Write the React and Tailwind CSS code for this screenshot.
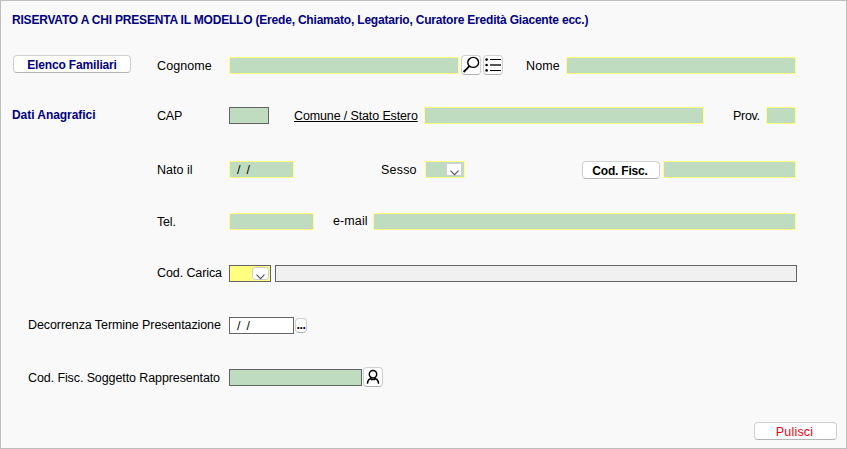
import React from 'react';
import clsx from 'clsx';

const tones = {
  light: 'border-[#ffff80] bg-[#c0dcc0]',
  dark: 'border-[#646464] bg-[#c0dcc0]',
  yellow: 'border-[#646464] bg-[#ffff80]',
  white: 'border-[#646464] bg-white',
  grey: 'border-[#646464] bg-[#f0f0f0]',
};

const Row = ({ className, children }) => (
  <div className={clsx('flex items-start h-[17px]', className)}>{children}</div>
);

const Label = ({ className, children }) => (
  <span className={clsx('shrink-0 whitespace-pre leading-[18px]', className)}>{children}</span>
);

const Field = ({ tone = 'light', className, children }) => (
  <div className={clsx('shrink-0 h-[17px] border flex justify-between whitespace-pre leading-[16px]', tones[tone], className)}>
    {children}
  </div>
);

const Button = ({ className, children }) => (
  <button
    className={clsx(
      'shrink-0 flex items-center justify-center bg-white border border-[#d0d0d0] border-b-[#b4b4b4] rounded-[4px] whitespace-pre',
      className
    )}
  >
    {children}
  </button>
);

const Arrow = ({ className }) => (
  <span className={clsx('ml-auto bg-white border border-[#d0d0d0] flex', className)}>
    <svg width="9" height="6" viewBox="0 0 9 6" className="m-auto translate-y-[3px]" fill="none" stroke="#505050" strokeWidth="1.1">
      <path d="M.5 .7 4.5 4.7 8.5 .7" />
    </svg>
  </span>
);

const SearchIcon = () => (
  <svg width="18" height="18" viewBox="0 0 18 18" className="shrink-0" fill="none" stroke="#000">
    <ellipse cx="11.2" cy="6.4" rx="5.4" ry="5" strokeWidth="1.4" />
    <path d="M7.4 10.2 1.6 16" strokeWidth="1.8" />
  </svg>
);

const ListIcon = () => (
  <svg width="18" height="18" viewBox="0 0 18 18" className="shrink-0">
    <g fill="#000">
      <circle cx="2.6" cy="3.6" r="1.3" />
      <circle cx="2.6" cy="9" r="1.3" />
      <circle cx="2.6" cy="14.4" r="1.3" />
      <rect x="6" y="3" width="11" height="1" />
      <rect x="6" y="14" width="11" height="1" />
    </g>
    <rect x="6" y="8" width="11" height="2" fill="#555" />
  </svg>
);

const PersonIcon = () => (
  <svg width="18" height="18" viewBox="0 0 18 18" className="shrink-0" fill="none" stroke="#000" strokeWidth="1.5">
    <circle cx="9" cy="6.2" r="3.7" />
    <path d="M6.4 9.4 7.6 11.6H10.4L11.6 9.4M6.6 10.8C4.4 11.4 3.5 13.2 3.5 15.8M11.4 10.8C13.6 11.4 14.5 13.2 14.5 15.8" />
  </svg>
);

export default function App() {
  return (
    <div className="w-[847px] h-[449px] overflow-hidden bg-[#f9f9f9] border border-[#bebebe] font-['Liberation_Sans',Arial,sans-serif] text-[12.5px] text-black">
      <Row className="mt-[10px] pl-[11px] text-[12px] text-[#000080] font-bold">
        <Label className="tracking-[-0.2px]">RISERVATO A CHI PRESENTA IL MODELLO (Erede, Chiamato, Legatario, Curatore Eredità Giacente ecc.)</Label>
      </Row>

      <Row className="mt-[29px] pl-[12px]">
        <Button className="-mt-[2px] w-[118px] h-[18px] pt-[2px] font-bold text-[12px] text-[#000080] tracking-[-0.15px]">Elenco Familiari</Button>
        <Label className="ml-[26px] w-[72px] tracking-[0.1px]">Cognome</Label>
        <Field className="w-[230px]" />
        <Button className="-mt-[2px] ml-[2px] w-[20px] h-[20px]"><SearchIcon /></Button>
        <Button className="-mt-[2px] ml-[2px] w-[20px] h-[20px]"><ListIcon /></Button>
        <Label className="ml-[23px] w-[40px] tracking-[0.1px]">Nome</Label>
        <Field className="w-[230px]" />
      </Row>

      <Row className="mt-[33px] pl-[11px]">
        <Label className="-mt-[1px] w-[145px] font-bold text-[12px] text-[#000080] tracking-[-0.05px]">Dati Anagrafici</Label>
        <Label className="w-[72px] tracking-[-0.2px]">CAP</Label>
        <Field tone="dark" className="w-[40px]" />
        <Label className="ml-[25px] w-[130px] tracking-[-0.13px] underline underline-offset-1">Comune / Stato Estero</Label>
        <Field className="w-[280px]" />
        <Label className="ml-[29px] w-[33px] tracking-[-0.3px]">Prov.</Label>
        <Field className="w-[30px]" />
      </Row>

      <Row className="mt-[37px] pl-[156px]">
        <Label className="w-[72px]">Nato il</Label>
        <Field className="w-[65px] pl-[7px] tracking-[-0.3px]">/  /</Field>
        <Label className="ml-[87px] w-[44px] tracking-[0.2px]">Sesso</Label>
        <Field className="w-[40px] pr-[2px]"><Arrow className="mt-[1px] w-[16px] h-[13px]" /></Field>
        <Button className="ml-[117px] w-[78px] h-[18px] pt-[2px] pr-[2px] font-bold text-[12px] tracking-[-0.2px]">Cod. Fisc.</Button>
        <Field className="ml-[3px] w-[133px]" />
      </Row>

      <Row className="mt-[35px] pl-[156px]">
        <Label className="w-[72px] tracking-[-0.2px]">Tel.</Label>
        <Field className="w-[85px]" />
        <Label className="-mt-[1px] ml-[19px] w-[40px] tracking-[0.1px]">e-mail</Label>
        <Field className="w-[423px]" />
      </Row>

      <Row className="mt-[35px] pl-[156px]">
        <Label className="-mt-[1px] w-[72px] tracking-[-0.1px]">Cod. Carica</Label>
        <Field tone="yellow" className="w-[42px] pr-[1px]"><Arrow className="mt-[1px] w-[17px] h-[13px] rounded-[3px]" /></Field>
        <Field tone="grey" className="ml-[4px] w-[522px]" />
      </Row>

      <Row className="mt-[35px] pl-[27px]">
        <Label className="-mt-[1px] w-[201px] tracking-[-0.09px]">Decorrenza Termine Presentazione</Label>
        <Field tone="white" className="w-[65px] pl-[7px] tracking-[-0.3px]">/  /</Field>
        <Button className="mt-[1px] ml-[1px] w-[12px] h-[15px] font-bold tracking-[-0.4px]">...</Button>
      </Row>

      <Row className="mt-[35px] pl-[27px]">
        <Label className="w-[201px] tracking-[-0.1px]">Cod. Fisc. Soggetto Rappresentato</Label>
        <Field tone="dark" className="w-[133px]" />
        <Button className="-mt-[2px] ml-[1px] w-[20px] h-[20px]"><PersonIcon /></Button>
      </Row>

      <div className="mt-[36px] pr-[9px] flex justify-end">
        <Button className="w-[83px] h-[18px] pt-[2px] pr-[2px] text-[#f00014] tracking-[0.2px]">Pulisci</Button>
      </div>
    </div>
  );
}
